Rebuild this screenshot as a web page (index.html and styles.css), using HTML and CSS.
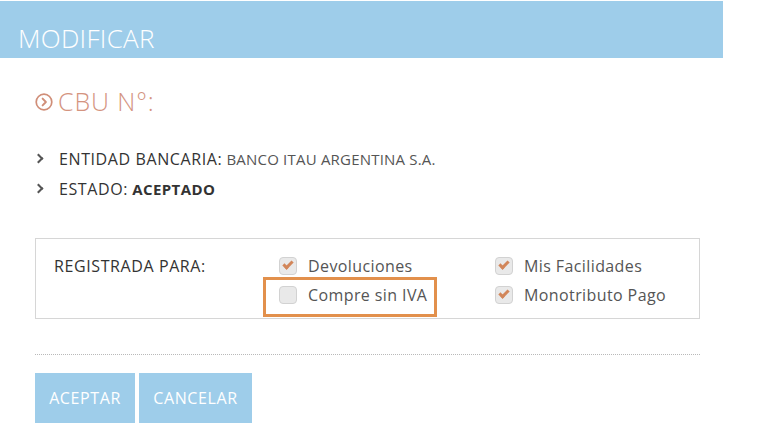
FILE: index.html
```html
<!DOCTYPE html>
<html lang="es">
<head>
<meta charset="utf-8">
<title>Modificar CBU</title>
<link rel="stylesheet" href="styles.css">
</head>
<body>
<div class="modal">
  <header class="modal-head">MODIFICAR</header>
  <div class="modal-body">
    <h2 class="title">
      <svg class="title-icon" viewBox="0 0 18 18" width="18" height="18" aria-hidden="true">
        <circle cx="9" cy="9" r="7.8" fill="none" stroke="currentColor" stroke-width="1.7"/>
        <path d="M7.6 5.6 L10.9 9 L7.6 12.4" fill="none" stroke="currentColor" stroke-width="1.9" stroke-linecap="round" stroke-linejoin="round"/>
      </svg>
      <span>CBU N°:</span>
    </h2>
    <ul class="info">
      <li><span class="chev"></span><span class="lbl">ENTIDAD BANCARIA:</span>&nbsp;<span class="val">BANCO ITAU ARGENTINA S.A.</span></li>
      <li><span class="chev"></span><span class="lbl">ESTADO:</span>&nbsp;<strong class="strong">ACEPTADO</strong></li>
    </ul>
    <div class="reg">
      <div class="reg-label">REGISTRADA PARA:</div>
      <div class="reg-grid">
        <div class="chk on"><span class="box"></span>Devoluciones</div>
        <div class="chk on"><span class="box"></span>Mis Facilidades</div>
        <div class="chk marked"><span class="box"></span>Compre sin IVA</div>
        <div class="chk on"><span class="box"></span>Monotributo Pago</div>
      </div>
    </div>
    <div class="dots"></div>
    <div class="actions">
      <button class="btn btn-ok">ACEPTAR</button>
      <button class="btn btn-cancel">CANCELAR</button>
    </div>
  </div>
</div>
</body>
</html>
```

FILE: styles.css
```css
*, *::before, *::after { box-sizing: border-box; }

html, body {
  margin: 0;
  padding: 0;
  background: #ffffff;
}

body {
  font-family: "Open Sans", "Liberation Sans", sans-serif;
  color: #333333;
}

.modal {
  width: 723px;
  margin-top: 1px;
}

.modal-head {
  height: 57px;
  background: #9ecdea;
  color: #ffffff;
  font-size: 26px;
  font-weight: 300;
  line-height: 31px;
  padding: 22px 18px 4px;
  letter-spacing: 0.3px;
}

.modal-body {
  padding: 28px 23px 0 35px;
}

.title {
  margin: 0;
  display: flex;
  align-items: center;
  gap: 5px;
  height: 30px;
  font-size: 25px;
  font-weight: 300;
  color: #d4947f;
  line-height: 30px;
  letter-spacing: 0.9px;
}

.title-icon {
  color: #d08e78;
  flex: none;
  margin-top: 1px;
}

.info {
  list-style: none;
  margin: 28px 0 0;
  padding: 0;
}

.info li {
  display: flex;
  align-items: center;
  height: 30px;
  white-space: nowrap;
}

.chev {
  width: 24px;
  height: 10px;
  flex: none;
  position: relative;
}

.chev::before {
  content: "";
  position: absolute;
  left: 0;
  top: 1px;
  width: 7px;
  height: 7px;
  border-top: 2px solid #555;
  border-right: 2px solid #555;
  transform: rotate(45deg);
}

.lbl {
  color: #333333;
  font-size: 16px;
  letter-spacing: 0.6px;
}

.val {
  font-size: 15px;
  color: #555555;
  letter-spacing: 0.2px;
}

.strong {
  font-weight: 700;
  font-size: 15px;
  color: #333;
  letter-spacing: 0.4px;
}

.reg {
  margin-top: 34px;
  border: 1px solid #d6d6d6;
  display: flex;
  padding: 14px 0 7px 18px;
}

.reg-label {
  width: 225px;
  font-size: 16px;
  line-height: 26px;
  color: #333;
  letter-spacing: 0.6px;
}

.reg-grid {
  display: grid;
  grid-template-columns: 216px 200px;
  grid-auto-rows: 29px;
}

.chk {
  position: relative;
  display: flex;
  align-items: center;
  gap: 11px;
  height: 26px;
  font-size: 16px;
  color: #555555;
  letter-spacing: 0.4px;
  white-space: nowrap;
}

.chk .box {
  width: 18px;
  height: 18px;
  border-radius: 4px;
  background: #e9e9e9;
  border: 1px solid #d2d2d2;
  flex: none;
  position: relative;
}

.chk.on .box::after {
  content: "";
  position: absolute;
  left: 5px;
  top: 1px;
  width: 6px;
  height: 10px;
  border-right: 3px solid #d2865a;
  border-bottom: 3px solid #d2865a;
  transform: rotate(45deg);
}

.chk.marked::after {
  content: "";
  position: absolute;
  left: -16px;
  top: -5px;
  width: 174px;
  height: 40px;
  border: 3px solid #e2904c;
  pointer-events: none;
}

.dots {
  margin-top: 35px;
  border-top: 1px dotted #b9b9b9;
  width: 665px;
}

.actions {
  display: flex;
  gap: 4px;
  margin-top: 18px;
}

.btn {
  height: 50px;
  border: 0;
  background: #9ecdea;
  color: #ffffff;
  font-family: inherit;
  font-size: 16px;
  font-weight: 400;
  letter-spacing: 0.6px;
  padding: 0;
  cursor: pointer;
}

.btn-ok { width: 100px; }
.btn-cancel { width: 113px; }
```
